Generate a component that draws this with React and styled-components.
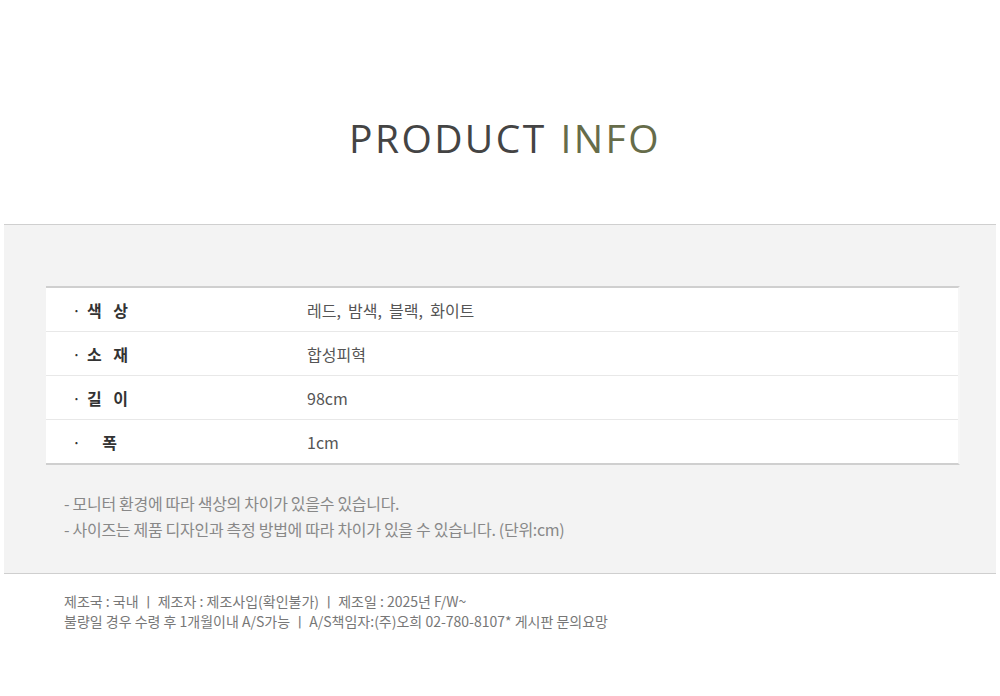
import React from 'react';
import styled, { createGlobalStyle } from 'styled-components';

const GlobalStyle = createGlobalStyle`
    body {
        margin: 0;
        background: #fff;
        font-family: "Noto Sans CJK KR", "Noto Sans", sans-serif;
    }
`

const Page = styled.div`
    width: 1000px;
    padding: 0 4px;
    box-sizing: border-box;
`

const Title = styled.h1`
    margin: 0;
    height: 224px;
    display: flex;
    align-items: center;
    justify-content: center;
    padding: 50px 0 0 10px;
    box-sizing: border-box;
    font-family: "Open Sans", sans-serif;
    font-weight: 500;
    font-size: 39px;
    letter-spacing: 2.4px;
    color: #444;
`

const Accent = styled.span`
    color: #666c4a;
    margin-left: 14px;
`

const Panel = styled.section`
    background: #f3f3f3;
    border-top: 1px solid #cfcfcf;
    border-bottom: 1px solid #cfcfcf;
    padding: 61px 36px 31px 42px;
`

const Table = styled.div`
    background: #fff;
    border-top: 2px solid #cfcfcf;
    border-bottom: 2px solid #cfcfcf;
    border-right: 2px solid #f6f6f6;
`

const Row = styled.div`
    display: flex;
    align-items: center;
    height: 43px;
    border-top: ${p => (p.first ? 'none' : '1px solid #e8e8e8')};
    font-size: 16px;
`

const Label = styled.div`
    width: 235px;
    padding-left: 26px;
    display: flex;
    align-items: center;
    font-weight: 700;
    color: #333;
    letter-spacing: 4px;
    white-space: pre;
`

const Dot = styled.span`
    font-weight: 400;
    margin-right: 6px;
    letter-spacing: 0;
`

const Value = styled.div`
    color: #555;
    letter-spacing: 0;
    white-space: pre;
`

const Notes = styled.div`
    padding: 25px 0 0 18px;
    color: #888;
    font-size: 16px;
    line-height: 26px;
    letter-spacing: -0.3px;
`

const Footer = styled.footer`
    padding: 17px 0 0 60px;
    color: #777;
    font-size: 14px;
    line-height: 20px;
    letter-spacing: 0;
`

const specs = [
    { label: '색 상', value: '레드,  밤색,  블랙,  화이트' },
    { label: '소 재', value: '합성피혁' },
    { label: '길 이', value: '98cm' },
    { label: '  폭', value: '1cm' },
]

export default function App() {
    return (
        <Page>
            <GlobalStyle />
            <Title>
                PRODUCT<Accent>INFO</Accent>
            </Title>
            <Panel>
                <Table>
                    {specs.map((s, i) => (
                        <Row key={s.label} first={i === 0}>
                            <Label>
                                <Dot>·</Dot>
                                {s.label}
                            </Label>
                            <Value>{s.value}</Value>
                        </Row>
                    ))}
                </Table>
                <Notes>
                    <div>- 모니터 환경에 따라 색상의 차이가 있을수 있습니다.</div>
                    <div>- 사이즈는 제품 디자인과 측정 방법에 따라 차이가 있을 수 있습니다.  (단위:cm)</div>
                </Notes>
            </Panel>
            <Footer>
                <div>제조국 :  국내  ㅣ 제조자 :  제조사입(확인불가)  ㅣ 제조일 : 2025년 F/W~</div>
                <div>불량일 경우 수령 후 1개월이내 A/S가능  ㅣ A/S책임자:(주)오희 02-780-8107* 게시판 문의요망</div>
            </Footer>
        </Page>
    )
}
